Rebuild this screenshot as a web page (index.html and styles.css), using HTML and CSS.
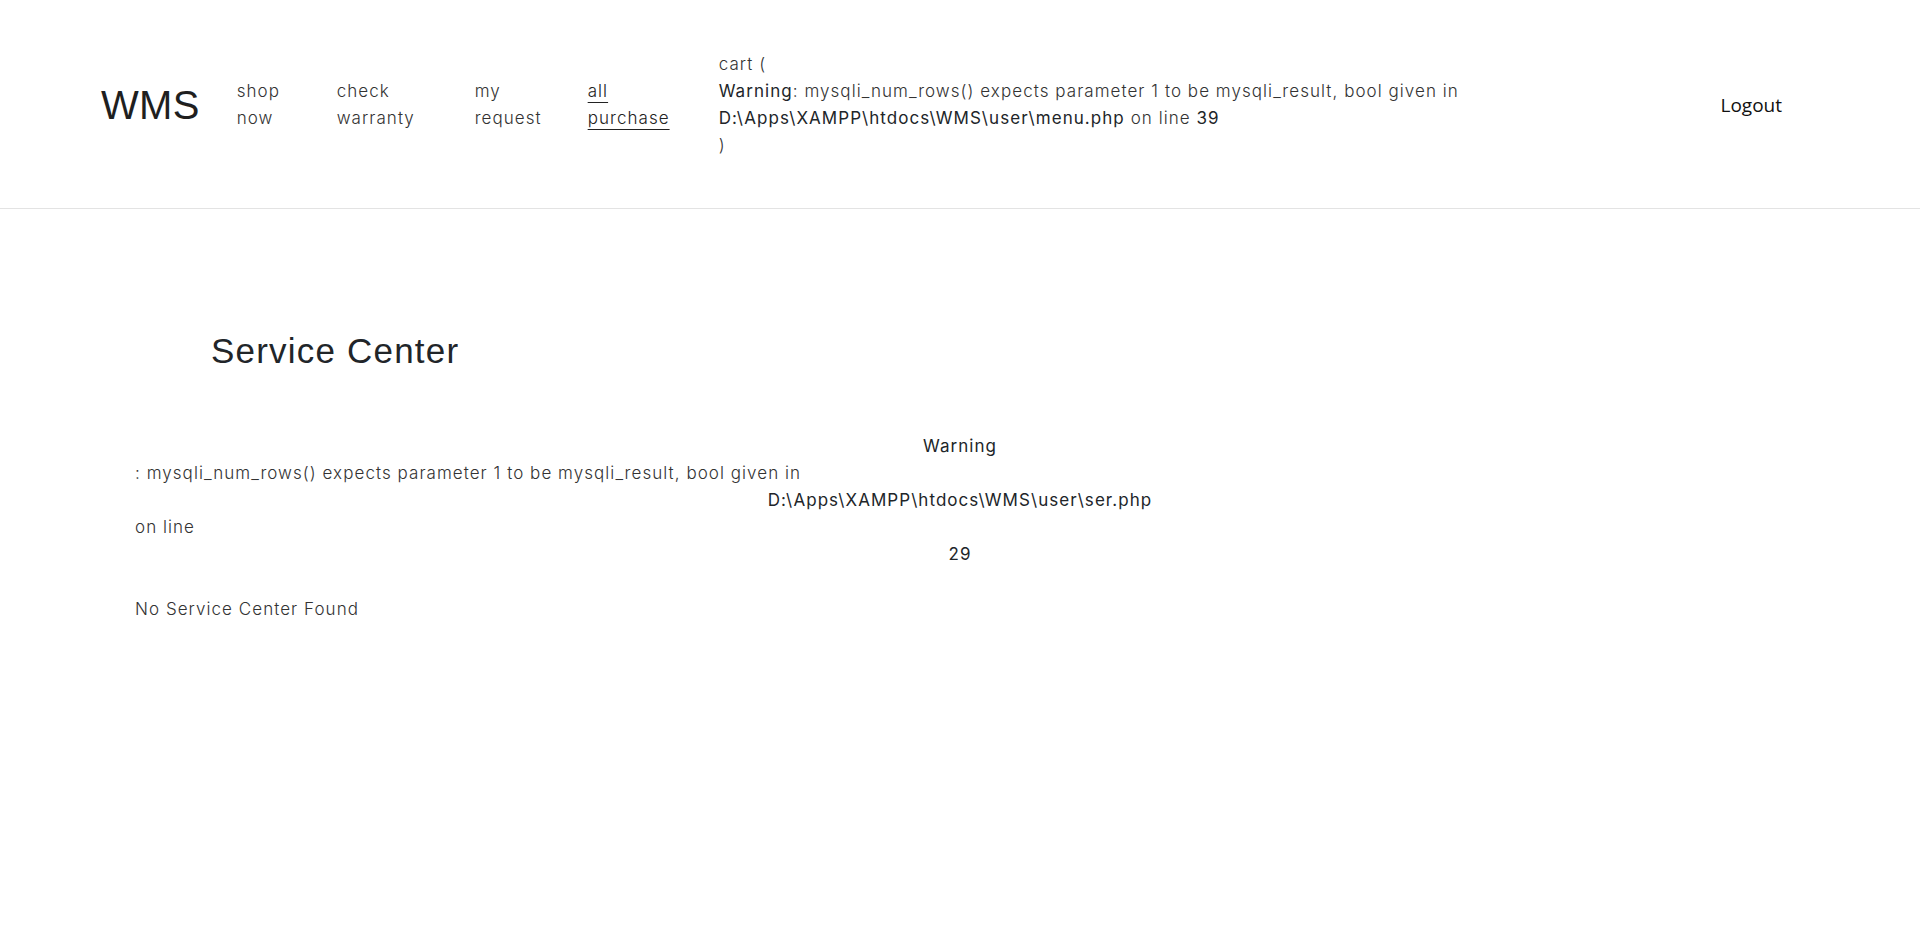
FILE: index.html
```html
<!DOCTYPE html>
<html lang="en">
<head>
<meta charset="utf-8">
<title>WMS - Service Center</title>
<link rel="stylesheet" href="styles.css">
</head>
<body>
<header class="header">
  <a class="logo" href="#">WMS</a>
  <ul class="nav">
    <li class="nav-item item-shop"><a href="#">shop now</a></li>
    <li class="nav-item item-check"><a href="#">check warranty</a></li>
    <li class="nav-item item-my"><a href="#">my request</a></li>
    <li class="nav-item item-all"><a class="active" href="#">all purchase</a></li>
    <li class="nav-item item-cart"><a href="#">cart (<br><b>Warning</b>: mysqli_num_rows() expects parameter 1 to be mysqli_result, bool given in <b>D:\Apps\XAMPP\htdocs\WMS\user\menu.php</b> on line <b>39</b><br>)</a></li>
  </ul>
  <a class="logout" href="#">Logout</a>
</header>
<main class="main">
  <h2 class="title">Service Center</h2>
  <div class="result">
    <b class="center">Warning</b>
    <span class="line">: mysqli_num_rows() expects parameter 1 to be mysqli_result, bool given in</span>
    <b class="center">D:\Apps\XAMPP\htdocs\WMS\user\ser.php</b>
    <span class="line">on line</span>
    <b class="center">29</b>
    <p class="empty">No Service Center Found</p>
  </div>
</main>
</body>
</html>
```
FILE: styles.css
```css
* { box-sizing: border-box; }
html, body { margin: 0; padding: 0; background: #fff; }
body {
  font-family: "Inter", "Open Sans", sans-serif;
  font-weight: 300;
  font-size: 17px;
  letter-spacing: 1.05px;
  line-height: 27px;
  color: #333;
}
a { color: inherit; text-decoration: none; }
b { font-weight: 400; color: #212529; }

.header {
  display: flex;
  align-items: center;
  height: 209px;
  padding: 2px 138px 0 101px;
  border-bottom: 1px solid #e3e3e3;
}
.logo {
  font-family: "Liberation Sans", Arial, sans-serif;
  font-weight: 400;
  font-size: 40px;
  letter-spacing: 0.3px;
  line-height: 46px;
  color: #1f1f1f;
  margin-right: 37px;
}
.nav {
  display: flex;
  align-items: center;
  list-style: none;
  margin: 0;
  padding: 0;
}
.nav-item { flex: 0 0 auto; }
.item-shop { width: 100px; }
.item-check { width: 138px; }
.item-my { width: 113px; }
.item-all { width: 131px; }
.item-cart { width: 820px; }
.nav-item a { display: inline-block; }
.item-shop a, .item-check a, .item-my a, .item-all a { width: min-content; }
.active { text-decoration: underline; text-underline-offset: 5px; text-decoration-thickness: 1px; color: #222; }
.logout {
  margin-left: auto;
  font-family: "Open Sans", "Noto Sans", sans-serif;
  font-weight: 400;
  font-size: 19px;
  letter-spacing: 0;
  color: #111;
}

.main { padding: 122px 135px 0; }
.title {
  margin: 0 0 62px 76px;
  font-family: "Liberation Sans", Arial, sans-serif;
  font-weight: 400;
  font-size: 35px;
  letter-spacing: 1.2px;
  line-height: 40px;
  color: #212529;
}
.result { display: flex; flex-direction: column; }
.center { text-align: center; }
.line { text-align: left; }
.empty { margin: 28px 0 0; }
```
